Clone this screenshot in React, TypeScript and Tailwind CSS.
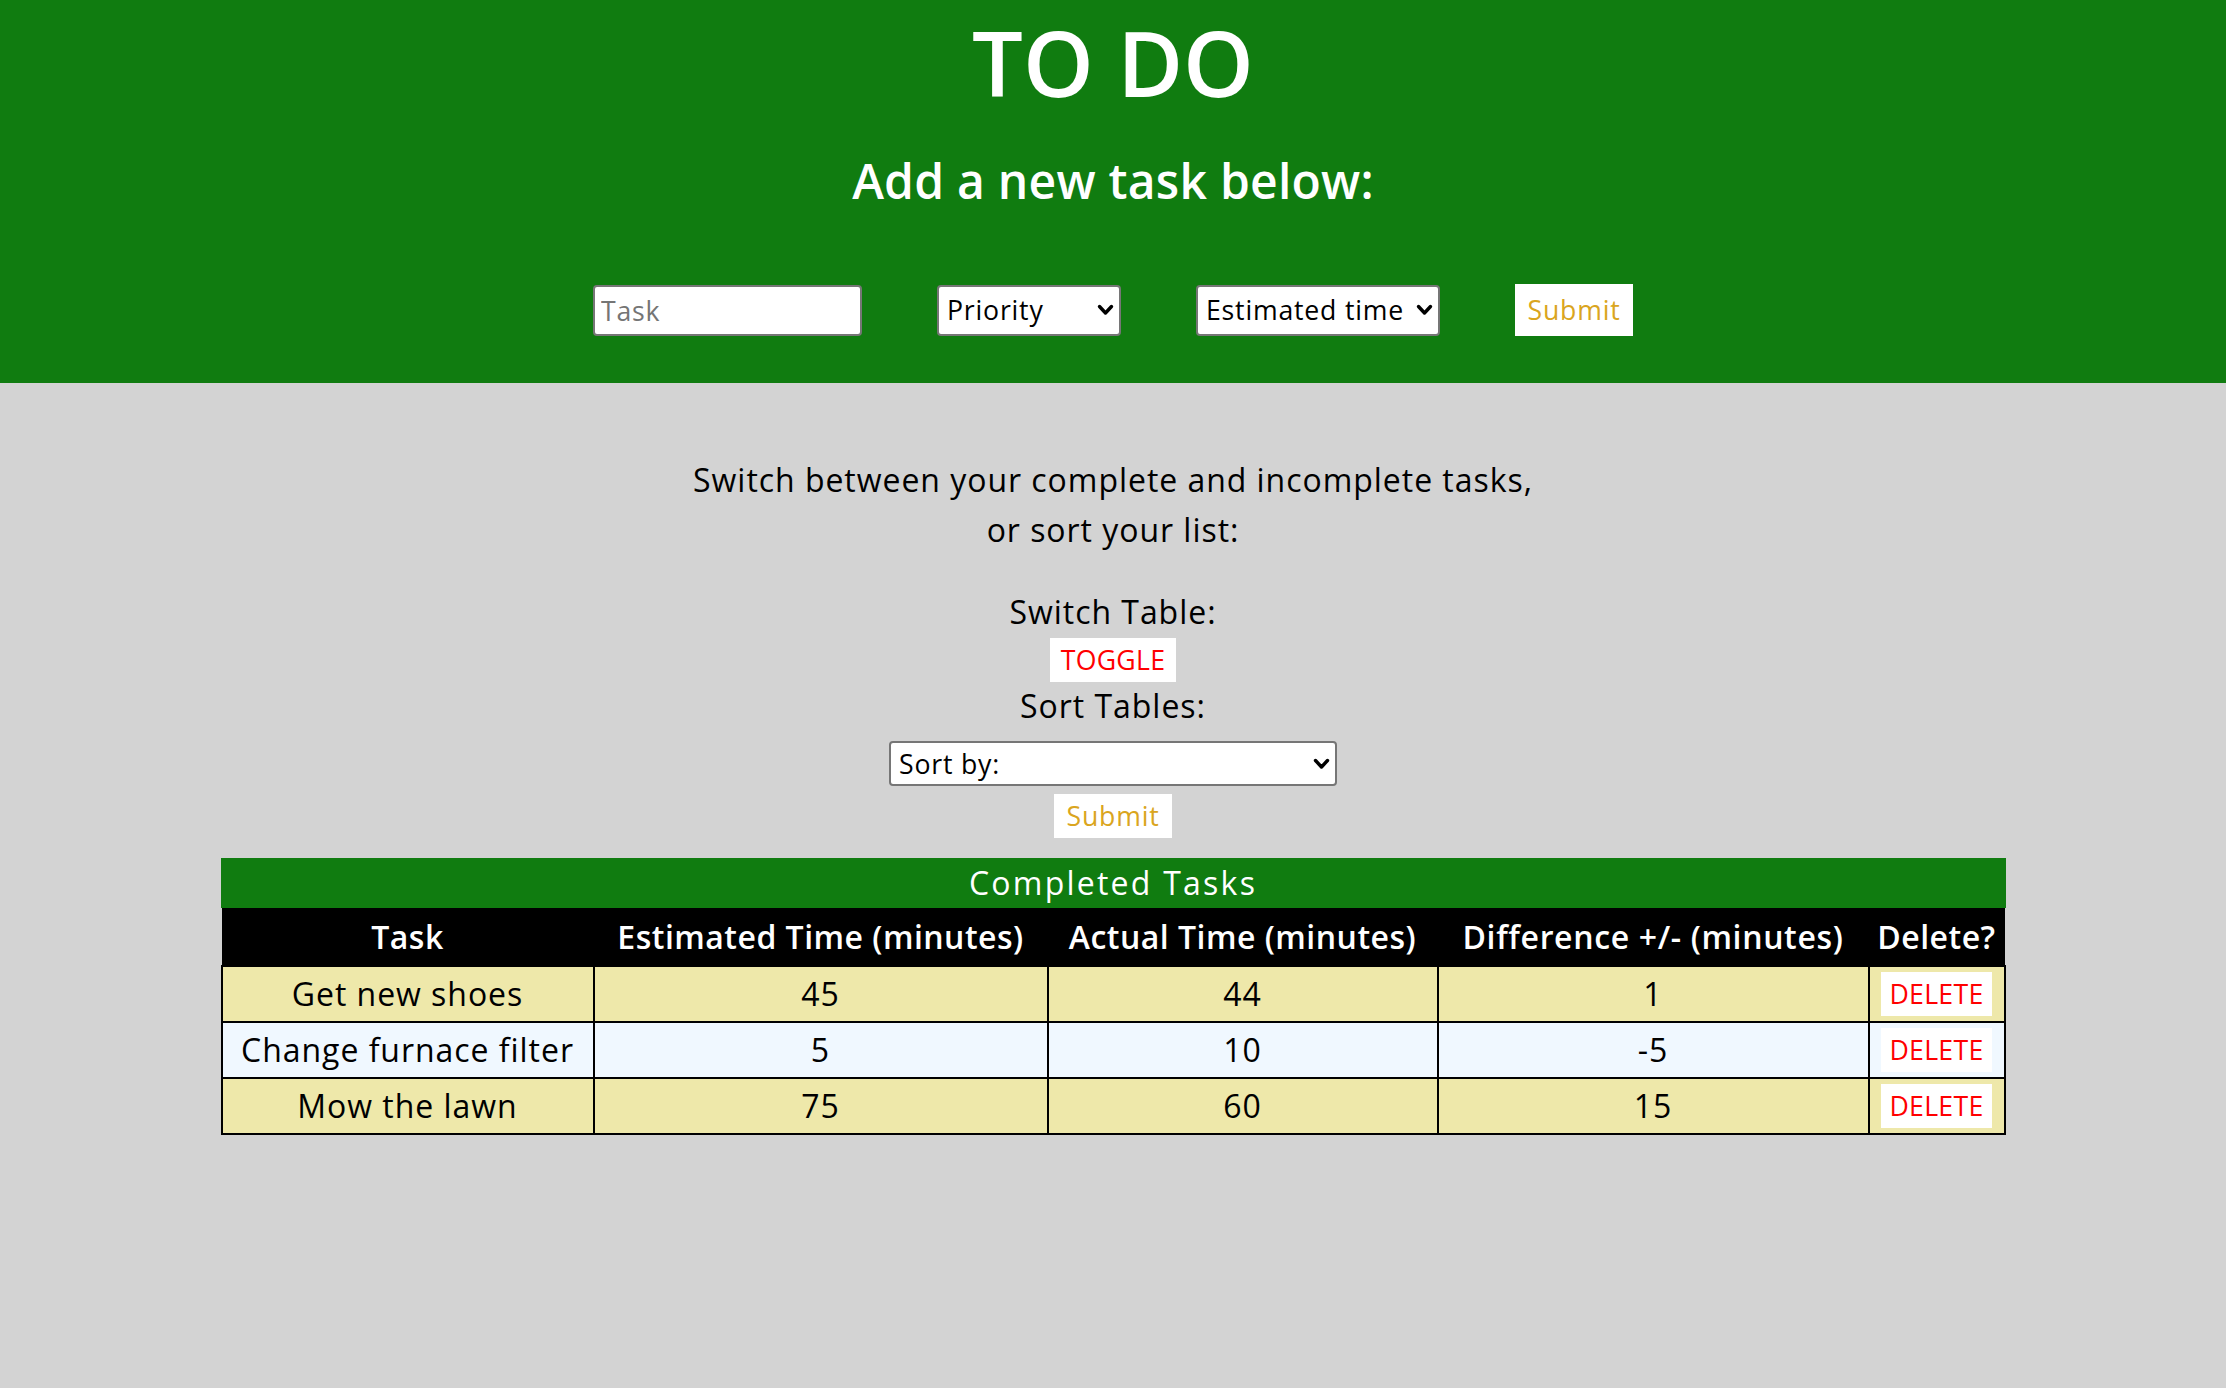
import React from "react";

const FONT = { fontFamily: '"Open Sans", "Liberation Sans", sans-serif' };

function Chevron() {
  return (
    <svg
      width="17"
      height="12"
      viewBox="0 0 17 12"
      className="pointer-events-none absolute right-[7px] top-1/2 -translate-y-1/2"
    >
      <polyline
        points="2.5,2.5 8.5,9 14.5,2.5"
        fill="none"
        stroke="black"
        strokeWidth="3.4"
        strokeLinecap="round"
        strokeLinejoin="round"
      />
    </svg>
  );
}

function SelectBox({ label, box }: { label: string; box: string }) {
  return (
    <div className={"relative " + box}>
      <select
        defaultValue=""
        className="h-full w-full appearance-none rounded-[4px] border-2 border-[#767676] bg-white pl-[8px] pr-[28px] text-left text-[26.67px] tracking-[0.03em] text-black outline-none"
        style={FONT}
      >
        <option value="">{label}</option>
      </select>
      <Chevron />
    </div>
  );
}

const rows = [
  { task: "Get new shoes", est: "45", act: "44", diff: "1", bg: "bg-[#eee8aa]" },
  { task: "Change furnace filter", est: "5", act: "10", diff: "-5", bg: "bg-[#f0f8ff]" },
  { task: "Mow the lawn", est: "75", act: "60", diff: "15", bg: "bg-[#eee8aa]" },
];

export default function App() {
  return (
    <div
      className="min-h-[1388px] w-full bg-[#d3d3d3] tracking-[0.06em] text-black"
      style={FONT}
    >
      <header className="bg-[#107c10] pb-[47px] pt-[12px] text-center text-white">
        <h1 className="text-[90px] font-semibold leading-[100px] tracking-[0em]">TO DO</h1>
        <h2 className="mt-[41px] text-[48px] font-semibold leading-[56px] tracking-[0.005em]">
          Add a new task below:
        </h2>
        <form
          className="mt-[75px] flex items-center justify-center gap-[75px]"
          onSubmit={(e) => e.preventDefault()}
        >
          <input
            type="text"
            placeholder="Task"
            className="h-[51px] w-[269px] rounded-[4px] border-2 border-[#767676] bg-white px-[6px] text-[26.67px] tracking-[0.03em] text-black outline-none placeholder:text-[#757575]"
            style={FONT}
          />
          <SelectBox label="Priority" box="h-[51px] w-[184px]" />
          <SelectBox label="Estimated time" box="h-[51px] w-[244px]" />
          <button
            type="submit"
            className="h-[52px] w-[118px] bg-white text-[26.67px] tracking-[0.03em] text-[#daa520]"
            style={FONT}
          >
            Submit
          </button>
        </form>
      </header>

      <main className="flex flex-col items-center text-center">
        <p className="pt-[72px] text-[32px] leading-[50px]">
          Switch between your complete and incomplete tasks,
          <br />
          or sort your list:
        </p>
        <div className="mt-[35px] text-[32px] leading-[44px]">Switch Table:</div>
        <button
          className="mt-[4px] h-[44px] w-[126px] bg-white text-[26.67px] tracking-[0.01em] text-[#ff0000]"
          style={FONT}
        >
          TOGGLE
        </button>
        <div className="mt-[2px] text-[32px] leading-[44px]">Sort Tables:</div>
        <div className="mt-[13px]">
          <SelectBox label="Sort by:" box="h-[45px] w-[448px]" />
        </div>
        <button
          className="mt-[8px] h-[44px] w-[118px] bg-white text-[26.67px] tracking-[0.03em] text-[#daa520]"
          style={FONT}
        >
          Submit
        </button>

        <table className="mt-[20px] w-[1783px] table-fixed border-collapse text-[32px]">
          <caption className="h-[50px] bg-[#107c10] text-[32px] leading-[50px] tracking-[0.07em] text-white">
            Completed Tasks
          </caption>
          <thead>
            <tr className="h-[58px] bg-black text-white">
              <th className="w-[372px] font-semibold tracking-[0.015em]">Task</th>
              <th className="w-[454px] font-semibold tracking-[0.015em]">
                Estimated Time (minutes)
              </th>
              <th className="w-[390px] font-semibold tracking-[0.015em]">
                Actual Time (minutes)
              </th>
              <th className="w-[431px] font-semibold tracking-[0.02em]">
                Difference +/- (minutes)
              </th>
              <th className="w-[136px] font-semibold tracking-[0.015em]">Delete?</th>
            </tr>
          </thead>
          <tbody>
            {rows.map((r) => (
              <tr key={r.task} className={"h-[56px] " + r.bg}>
                <td className="border-2 border-black leading-[44px]">{r.task}</td>
                <td className="border-2 border-black leading-[44px]">{r.est}</td>
                <td className="border-2 border-black leading-[44px]">{r.act}</td>
                <td className="border-2 border-black leading-[44px]">{r.diff}</td>
                <td className="border-2 border-black">
                  <div className="flex justify-center">
                    <button
                      className="h-[44px] w-[111px] bg-white text-[26.67px] tracking-[0.01em] text-[#ff0000]"
                      style={FONT}
                    >
                      DELETE
                    </button>
                  </div>
                </td>
              </tr>
            ))}
          </tbody>
        </table>
      </main>
    </div>
  );
}
